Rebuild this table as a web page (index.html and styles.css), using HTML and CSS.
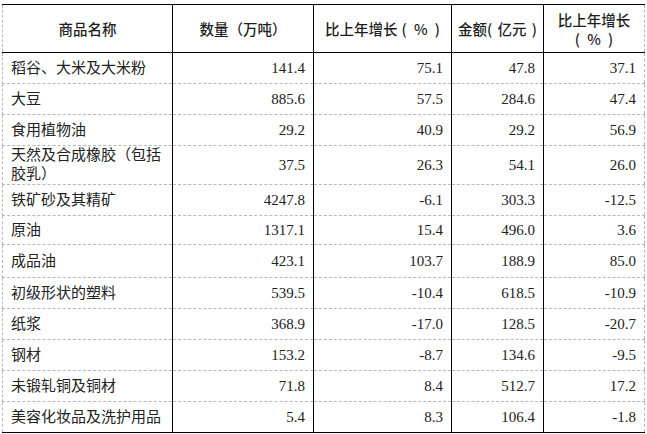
FILE: index.html
```html
<!DOCTYPE html>
<html lang="zh">
<head>
<meta charset="utf-8">
<link rel="stylesheet" href="styles.css">
</head>
<body>
<table class="data">
  <colgroup>
    <col class="c-name"><col class="c-qty"><col class="c-qg"><col class="c-amt"><col class="c-ag">
  </colgroup>
  <thead>
    <tr class="head">
      <th>商品名称</th>
      <th>数量（万吨）</th>
      <th>比上年增长<span class="pct">( % )</span></th>
      <th>金额( 亿元 )</th>
      <th>比上年增长<br><span class="pct">( % )</span></th>
    </tr>
  </thead>
  <tbody>
    <tr class="r31"><td class="name">稻谷、大米及大米粉</td><td>141.4</td><td>75.1</td><td>47.8</td><td>37.1</td></tr>
    <tr class="r31"><td class="name">大豆</td><td>885.6</td><td>57.5</td><td>284.6</td><td>47.4</td></tr>
    <tr class="r31"><td class="name">食用植物油</td><td>29.2</td><td>40.9</td><td>29.2</td><td>56.9</td></tr>
    <tr class="r36"><td class="name">天然及合成橡胶（包括<br>胶乳）</td><td>37.5</td><td>26.3</td><td>54.1</td><td>26.0</td></tr>
    <tr class="r31"><td class="name">铁矿砂及其精矿</td><td>4247.8</td><td>-6.1</td><td>303.3</td><td>-12.5</td></tr>
    <tr class="r29"><td class="name">原油</td><td>1317.1</td><td>15.4</td><td>496.0</td><td>3.6</td></tr>
    <tr class="r33"><td class="name">成品油</td><td>423.1</td><td>103.7</td><td>188.9</td><td>85.0</td></tr>
    <tr class="r31"><td class="name">初级形状的塑料</td><td>539.5</td><td>-10.4</td><td>618.5</td><td>-10.9</td></tr>
    <tr class="r31"><td class="name">纸浆</td><td>368.9</td><td>-17.0</td><td>128.5</td><td>-20.7</td></tr>
    <tr class="r31"><td class="name">钢材</td><td>153.2</td><td>-8.7</td><td>134.6</td><td>-9.5</td></tr>
    <tr class="r31"><td class="name">未锻轧铜及铜材</td><td>71.8</td><td>8.4</td><td>512.7</td><td>17.2</td></tr>
    <tr class="r31"><td class="name">美容化妆品及洗护用品</td><td>5.4</td><td>8.3</td><td>106.4</td><td>-1.8</td></tr>
  </tbody>
</table>
</body>
</html>
```

FILE: styles.css
```css
html, body {
  margin: 0;
  padding: 0;
  background: #fff;
}
body {
  padding: 4px 0 0 2px;
}
.data {
  border-collapse: collapse;
  table-layout: fixed;
  width: 643px;
  font-family: "Liberation Serif", "Noto Sans CJK SC", serif;
  font-size: 15px;
  color: #222;
  border-left: 1px dashed #b8b8b8;
  border-right: 1px dashed #b8b8b8;
}
.c-name { width: 170px; }
.c-qty { width: 141px; }
.c-qg { width: 138px; }
.c-amt { width: 92px; }
.c-ag { width: 101px; }

.head {
  height: 48px;
}
.head th {
  font-family: "Noto Sans CJK SC", "Liberation Sans", sans-serif;
  font-weight: 500;
  font-size: 14.5px;
  line-height: 19px;
  color: #1e1e1e;
  text-align: center;
  vertical-align: middle;
  padding: 0 2px;
  border-top: 1px solid #000;
  border-bottom: 1px solid #000;
  border-left: 1px solid #000;
  white-space: pre;
  word-spacing: 2px;
}
.head th:first-child { border-left: 1px dashed #b8b8b8; }
.pct {
  padding-left: 4px;
  word-spacing: 4px;
}
.head th:last-child .pct {
  padding-left: 0;
}

td {
  text-align: right;
  vertical-align: middle;
  padding: 0 8px 0 8px;
  line-height: 19px;
  white-space: nowrap;
  border-left: 1px solid #000;
  border-bottom: 1px dashed #b8b8b8;
}
td.name {
  text-align: left;
  border-left: 1px dashed #b8b8b8;
}
tbody tr:last-child td {
  border-bottom: 1px solid #000;
}
.r29 { height: 29px; }
.r31 { height: 31px; }
.r33 { height: 33px; }
.r36 { height: 36px; }
```
